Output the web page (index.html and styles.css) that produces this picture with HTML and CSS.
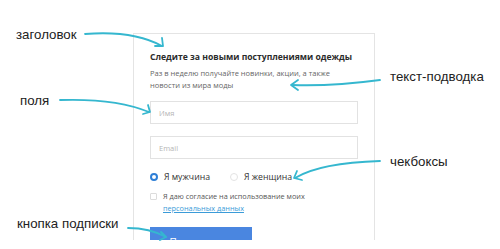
FILE: index.html
```html
<!DOCTYPE html>
<html lang="ru">
<head>
<meta charset="utf-8">
<link rel="stylesheet" href="styles.css">
</head>
<body>
<div class="stage">
  <div class="card">
    <h2 class="title">Следите за новыми поступлениями одежды</h2>
    <p class="lead">Раз в неделю получайте новинки, акции, а также<br>новости из мира моды</p>
    <div class="field">Имя</div>
    <div class="field">Email</div>
    <div class="radios">
      <span class="radio"><span class="dot on"></span>Я мужчина</span>
      <span class="radio"><span class="dot"></span>Я женщина</span>
    </div>
    <div class="agree">
      <span class="box"></span>
      <span class="agree-text">Я даю согласие на использование моих<br><a class="link">персональных данных</a></span>
    </div>
    <div class="btn">Подписаться</div>
  </div>

  <span class="note n1">заголовок</span>
  <span class="note n2">поля</span>
  <span class="note n3">текст-подводка</span>
  <span class="note n4">чекбоксы</span>
  <span class="note n5">кнопка подписки</span>

  <svg class="arrows" width="500" height="249" viewBox="0 0 500 249">
    <g fill="none" stroke="#35b7cf" stroke-width="1.8" stroke-linecap="round" stroke-linejoin="round">
      <path d="M85 34 C110 32 140 34 162 46"/>
      <path d="M162 38 L163 46 L155 46"/>
      <path d="M60 100 C90 99 125 102 149 112"/>
      <path d="M148 105 L150 112 L143 114"/>
      <path d="M380 80 C350 84 320 86 292 85"/>
      <path d="M298 80 L291 85 L298 90"/>
      <path d="M380 161 C345 162 315 166 295 178"/>
      <path d="M297 171 L294 178 L302 180"/>
      <path d="M128 228 C142 228 155 231 166 237"/>
      <path d="M161 232 L166 237 L160 240"/>
    </g>
  </svg>
</div>
</body>
</html>
```

FILE: styles.css
```css
html, body {
  margin: 0;
  padding: 0;
  background: #fff;
}
.stage {
  position: relative;
  width: 500px;
  height: 249px;
  overflow: hidden;
  font-family: "Open Sans", "Noto Sans", sans-serif;
}
.card {
  box-sizing: border-box;
  width: 242px;
  height: 207px;
  margin: 33px 0 0 133px;
  padding: 16px 16px 0 16px;
  border: 1px solid #e4e4e4;
  border-bottom: none;
  overflow: hidden;
  display: flex;
  flex-direction: column;
}
.title {
  margin: 0;
  font-size: 8.6px;
  line-height: 14px;
  font-weight: 700;
  color: #2b2b2b;
  white-space: nowrap;
}
.lead {
  margin: 4px 0 0;
  font-size: 7.5px;
  line-height: 11.5px;
  color: #666;
}
.field {
  box-sizing: border-box;
  flex: none;
  height: 23px;
  margin-top: 10px;
  border: 1px solid #e2e2e2;
  padding: 0 8px;
  display: flex;
  align-items: center;
  font-size: 7.5px;
  color: #b5b5b5;
}
.field + .field {
  margin-top: 12px;
}
.radios {
  display: flex;
  gap: 20px;
  margin-top: 12px;
  height: 12px;
  align-items: center;
}
.radio {
  display: flex;
  align-items: center;
  gap: 6px;
  font-size: 8.7px;
  color: #333;
}
.dot {
  box-sizing: border-box;
  width: 8px;
  height: 8px;
  border-radius: 50%;
  border: 1px solid #e3e3e3;
  background: #fff;
}
.dot.on {
  border: 2.5px solid #2f7fd6;
}
.agree {
  display: flex;
  gap: 6px;
  margin-top: 7px;
}
.box {
  box-sizing: border-box;
  flex: none;
  width: 7px;
  height: 7px;
  margin-top: 3px;
  border: 1px solid #dcdcdc;
  border-radius: 1px;
}
.agree-text {
  font-size: 7.3px;
  line-height: 12px;
  color: #555;
}
.link {
  color: #3a9bd8;
  text-decoration: underline;
}
.btn {
  flex: none;
  margin-top: 13px;
  width: 102px;
  height: 30px;
  background: #4a86e0;
  color: #fff;
  font-size: 10px;
  display: flex;
  align-items: center;
  justify-content: center;
}
.note {
  position: absolute;
  font-family: "Liberation Sans", Arial, sans-serif;
  font-size: 13.3px;
  line-height: 16px;
  color: #222;
  white-space: nowrap;
}
.n1 { left: 16px; top: 27px; }
.n2 { left: 20px; top: 93px; }
.n3 { left: 390px; top: 69px; }
.n4 { left: 390px; top: 154px; }
.n5 { left: 17px; top: 216px; }
.arrows {
  position: absolute;
  left: 0;
  top: 0;
  pointer-events: none;
}
```
